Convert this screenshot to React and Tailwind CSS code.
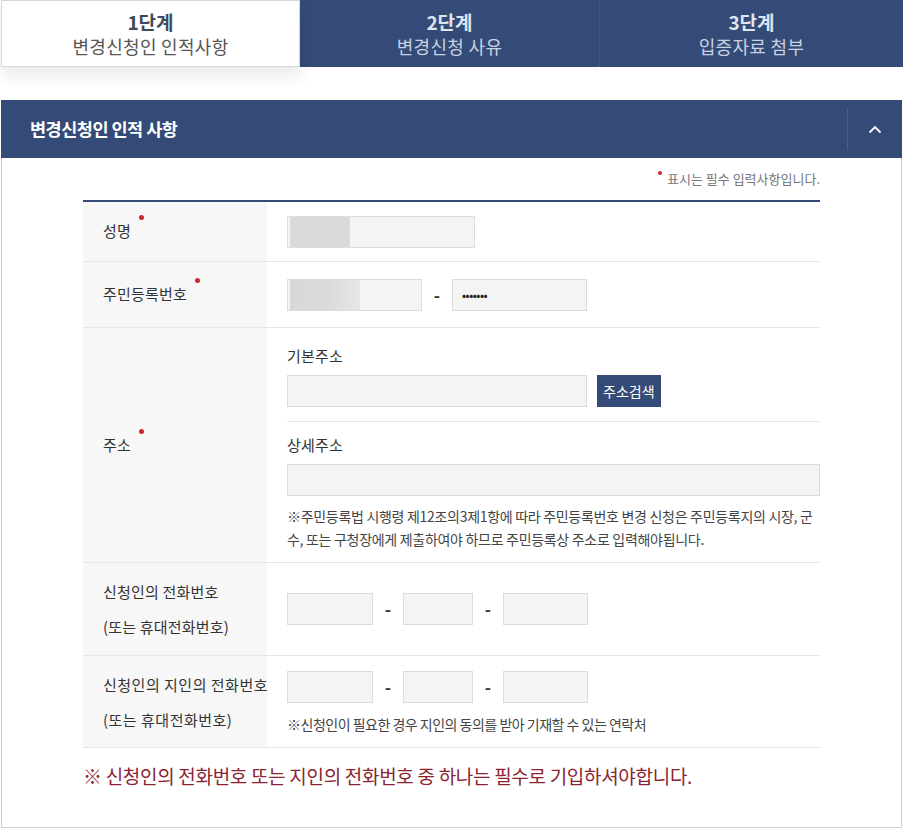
import React from "react";

const font = { fontFamily: '"Noto Sans CJK KR", "Noto Sans", sans-serif' };

const Dot = () => <span className="inline-block w-[5px] h-[5px] rounded-full bg-[#d3242b] ml-[8px] -translate-y-[14px]" />;

const Input = ({ className = "", children }) => (
  <div className={`h-[32px] bg-[#f4f4f4] border border-[#dcdcdc] relative ${className}`}>{children}</div>
);

const Dash = () => <span className="text-[#333] text-[17px] font-bold w-[30px] text-center">-</span>;

const PhoneInputs = () => (
  <div className="flex items-center">
    <Input className="w-[86px]" />
    <Dash />
    <Input className="w-[70px]" />
    <Dash />
    <Input className="w-[85px]" />
  </div>
);

const Tab = ({ step, title, active, last }) => (
  <div
    className={
      active
        ? "flex-1 h-[67px] bg-white border border-[#d6d6d6] shadow-[0_10px_14px_rgba(0,0,0,0.08)] flex flex-col items-center justify-center z-10"
        : `flex-1 h-[67px] bg-[#344b77] flex flex-col items-center justify-center ${last ? "" : "border-r border-[#41577f]"}`
    }
  >
    <div className={`text-[19px] font-bold leading-[24px] ${active ? "text-[#3f4a5a]" : "text-[#dfe5ef]"}`}>{step}</div>
    <div className={`text-[18px] leading-[24px] tracking-[0.3px] ${active ? "text-[#555]" : "text-[#c9d2e1]"}`}>{title}</div>
  </div>
);

export default function App() {
  return (
    <div className="w-[903px] bg-white" style={font}>
      <div className="flex">
        <div className="w-[300px] pl-[1px] flex"><Tab step="1단계" title="변경신청인 인적사항" active /></div>
        <div className="w-[300px] flex"><Tab step="2단계" title="변경신청 사유" /></div>
        <div className="flex-1 flex"><Tab step="3단계" title="입증자료 첨부" last /></div>
      </div>

      <div className="mt-[33px] mx-[1px] w-[901px]">
        <div className="h-[58px] bg-[#344b77] flex items-center justify-between">
          <div className="pl-[29px] text-white text-[17.5px] font-bold tracking-[-0.5px]">변경신청인 인적 사항</div>
          <div className="h-[42px] w-[55px] border-l border-[#4a5f86] flex items-center justify-center">
            <svg width="14" height="9" viewBox="0 0 14 9" fill="none">
              <path d="M1.5 7.5L7 2l5.5 5.5" stroke="white" strokeWidth="1.8" />
            </svg>
          </div>
        </div>

        <div className="border-x border-b border-[#cfcfcf] h-[670px] px-[81px]">
          <div className="h-[42px] flex items-start justify-end pt-[11px] text-[13px] text-[#777]">
            <span className="w-[4px] h-[4px] rounded-full bg-[#d3242b] mt-[2px] mr-[5px]" />
            표시는 필수 입력사항입니다.
          </div>

          <div className="border-t-2 border-[#344b77] text-[15px] text-[#333] tracking-[0.2px]">
            <div className="flex h-[60px] border-b border-[#e6e6e6]">
              <div className="w-[184px] bg-[#f7f7f7] flex items-center pl-[20px]">성명<Dot /></div>
              <div className="flex-1 flex items-center pl-[20px]">
                <Input className="w-[188px]">
                  <div className="absolute left-[2px] top-0 bottom-0 w-[60px] bg-[#dadada]" />
                </Input>
              </div>
            </div>

            <div className="flex h-[66px] border-b border-[#e6e6e6]">
              <div className="w-[184px] bg-[#f7f7f7] flex items-center pl-[20px]">주민등록번호<Dot /></div>
              <div className="flex-1 flex items-center pl-[20px]">
                <Input className="w-[135px]">
                  <div className="absolute left-[2px] top-0 bottom-0 w-[70px] bg-gradient-to-r from-[#d8d8d8] via-[#dadada] to-[#e6e6e6]" />
                </Input>
                <Dash />
                <Input className="w-[135px] flex items-center pl-[9px] text-[12px] tracking-[-0.5px] leading-none text-[#222]">•••••••</Input>
              </div>
            </div>

            <div className="flex h-[235px] border-b border-[#e6e6e6]">
              <div className="w-[184px] bg-[#f7f7f7] flex items-center pl-[20px]">주소<Dot /></div>
              <div className="flex-1 pl-[20px]">
                <div className="pt-[17px] pb-[14px] border-b border-[#e6e6e6]">
                  <div className="leading-[22px]">기본주소</div>
                  <div className="flex items-center mt-[8px]">
                    <Input className="w-[300px]" />
                    <button className="ml-[10px] h-[32px] px-[6px] bg-[#344b77] text-white text-[14px] tracking-normal">주소검색</button>
                  </div>
                </div>
                <div className="pt-[12px]">
                  <div className="leading-[22px]">상세주소</div>
                  <Input className="w-full mt-[8px]" />
                  <div className="mt-[9px] text-[14px] leading-[23px] tracking-[-0.3px] text-[#444]">
                    ※주민등록법 시행령 제12조의3제1항에 따라 주민등록번호 변경 신청은 주민등록지의 시장, 군수, 또는 구청장에게 제출하여야 하므로 주민등록상 주소로 입력해야됩니다.
                  </div>
                </div>
              </div>
            </div>

            <div className="flex h-[93px] border-b border-[#e6e6e6]">
              <div className="w-[184px] bg-[#f7f7f7] flex flex-col justify-center pl-[20px] leading-[35px]">
                <div>신청인의 전화번호</div>
                <div>(또는 휴대전화번호)</div>
              </div>
              <div className="flex-1 flex items-center pl-[20px]">
                <PhoneInputs />
              </div>
            </div>

            <div className="flex h-[92px] border-b border-[#e6e6e6]">
              <div className="w-[184px] bg-[#f7f7f7] flex flex-col justify-center pl-[20px] leading-[35px] tracking-[0.5px] whitespace-nowrap">
                <div>신청인의 지인의 전화번호</div>
                <div>(또는 휴대전화번호)</div>
              </div>
              <div className="flex-1 pl-[20px] pt-[15px]">
                <PhoneInputs />
                <div className="mt-[11px] text-[14px] text-[#444] tracking-[-0.5px]">※신청인이 필요한 경우 지인의 동의를 받아 기재할 수 있는 연락처</div>
              </div>
            </div>
          </div>

          <div className="mt-[14px] text-[19px] text-[#8a2430] tracking-[-0.3px]">
            ※ 신청인의 전화번호 또는 지인의 전화번호 중 하나는 필수로 기입하셔야합니다.
          </div>
        </div>
      </div>
    </div>
  );
}
